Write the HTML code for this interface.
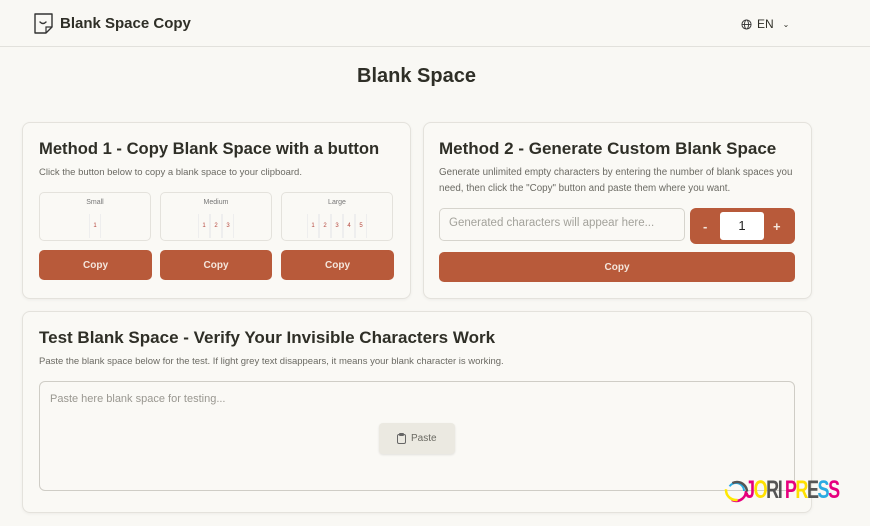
<!DOCTYPE html>
<html><head><meta charset="utf-8"><style>
*{box-sizing:border-box;margin:0;padding:0}
body{width:870px;height:526px;background:#f9f8f4;font-family:"Liberation Sans",sans-serif;color:#2f2f27;position:relative;overflow:hidden}
.hdr{position:absolute;left:0;top:0;width:870px;height:47px;border-bottom:1px solid #e2e1dc;background:#f9f8f4}
.logo{position:absolute;left:33px;top:13px}
.brand{position:absolute;left:60px;top:15px;font-size:15px;font-weight:bold}
.lang{position:absolute;left:741px;top:17px;font-size:12px;display:flex;align-items:center;gap:5px}
h1{position:absolute;left:0;width:833px;text-align:center;top:65px;font-size:20px;font-weight:bold}
.card{position:absolute;border:1px solid #e4e2dc;border-radius:8px;background:#faf9f5;box-shadow:0 1px 3px rgba(0,0,0,.05)}
.h2{position:absolute;font-size:17px;font-weight:bold;white-space:nowrap}
.p{position:absolute;font-size:9.5px;color:#6b6a63;line-height:16px}
.box{position:absolute;top:192px;width:112px;height:49px;border:1px solid #e4e2dc;border-radius:5px;text-align:center}
.box .l{font-size:7px;color:#777;margin-top:6px}
.nums{display:flex;justify-content:center;margin-top:8px}
.nums span{width:12px;height:24px;border-left:1px solid #eee;border-right:1px solid #eee;font-size:6px;color:#b5473d;line-height:24px}
.btn{position:absolute;background:#b85a3a;color:#f4e6dc;border-radius:5px;font-size:10px;font-weight:bold;text-align:center}
</style></head><body>
<div class="hdr">
<svg class="logo" width="22" height="22" viewBox="0 0 22 22"><path d="M2 1h17v13l-6 6H2z" fill="none" stroke="#333" stroke-width="1.4" stroke-linejoin="round"/><path d="M19 14h-6v6" fill="none" stroke="#333" stroke-width="1.2"/><path d="M7 9q3 3 6 0" fill="none" stroke="#333" stroke-width="1.4" stroke-linecap="round"/></svg>
<div class="brand">Blank Space Copy</div>
<div class="lang"><svg width="11" height="11" viewBox="0 0 12 12" fill="none" stroke="#333" stroke-width="1"><circle cx="6" cy="6" r="5"/><ellipse cx="6" cy="6" rx="2.2" ry="5"/><path d="M1 6h10"/></svg>EN <span style="font-size:8px;margin-left:4px">&#8964;</span></div>
</div>
<h1>Blank Space</h1>

<div class="card" style="left:22px;top:122px;width:389px;height:177px"></div>
<div class="h2" style="left:39px;top:139px;font-size:16.6px">Method 1 - Copy Blank Space with a button</div>
<div class="p" style="left:39px;top:165px">Click the button below to copy a blank space to your clipboard.</div>
<div class="box" style="left:39px"><div class="l">Small</div><div class="nums"><span>1</span></div></div>
<div class="box" style="left:160px"><div class="l">Medium</div><div class="nums"><span>1</span><span>2</span><span>3</span></div></div>
<div class="box" style="left:281px"><div class="l">Large</div><div class="nums"><span>1</span><span>2</span><span>3</span><span>4</span><span>5</span></div></div>
<div class="btn" style="left:39px;top:250px;width:113px;height:30px;line-height:31px">Copy</div>
<div class="btn" style="left:160px;top:250px;width:112px;height:30px;line-height:31px">Copy</div>
<div class="btn" style="left:281px;top:250px;width:113px;height:30px;line-height:31px">Copy</div>

<div class="card" style="left:423px;top:122px;width:389px;height:177px"></div>
<div class="h2" style="left:439px;top:139px">Method 2 - Generate Custom Blank Space</div>
<div class="p" style="left:439px;top:165px;width:358px;font-size:9.8px">Generate unlimited empty characters by entering the number of blank spaces you need, then click the "Copy" button and paste them where you want.</div>
<div style="position:absolute;left:439px;top:208px;width:246px;height:33px;border:1px solid #d6d4cd;border-radius:5px;font-size:11.5px;color:#a3a29b;padding:8px 9px">Generated characters will appear here...</div>
<div class="btn" style="left:690px;top:208px;width:105px;height:36px;border-radius:6px;font-size:13px">
<span style="position:absolute;left:13px;top:11px">-</span>
<div style="position:absolute;left:30px;top:4px;width:44px;height:28px;background:#fff;border-radius:3px;color:#222;line-height:28px;font-weight:normal">1</div>
<span style="position:absolute;left:83px;top:11px">+</span></div>
<div class="btn" style="left:439px;top:252px;width:356px;height:30px;line-height:31px">Copy</div>

<div class="card" style="left:22px;top:311px;width:790px;height:202px"></div>
<div class="h2" style="left:39px;top:328px">Test Blank Space - Verify Your Invisible Characters Work</div>
<div class="p" style="left:39px;top:354px">Paste the blank space below for the test. If light grey text disappears, it means your blank character is working.</div>
<div style="position:absolute;left:39px;top:381px;width:756px;height:110px;border:1px solid #cfcdc6;border-radius:6px;font-size:11px;color:#999790;padding:11px 10px">Paste here blank space for testing...</div>
<div style="position:absolute;left:379px;top:423px;width:76px;height:31px;background:#ebe9e1;border-radius:4px;box-shadow:0 1px 2px rgba(0,0,0,.1);font-size:10px;color:#6b6a63;line-height:31px;padding-left:18px">
<svg style="position:absolute;left:18px;top:10px" width="9" height="11" viewBox="0 0 9 11" fill="none" stroke="#666" stroke-width="1"><rect x="0.5" y="1.5" width="8" height="9" rx="1.5"/><rect x="2.5" y="0.5" width="4" height="2" rx=".5"/></svg><span style="margin-left:14px">Paste</span></div>

<div style="position:absolute;left:723px;top:474px;width:124px;height:32px">
<svg width="26" height="32" viewBox="0 0 26 32" style="position:absolute;left:0;top:0"><circle cx="13" cy="17" r="10" fill="none" stroke="#e6007e" stroke-width="2.5" stroke-dasharray="20 60"/><circle cx="13" cy="16" r="10" fill="none" stroke="#ffe800" stroke-width="2.5" stroke-dasharray="18 60" stroke-dashoffset="-14"/><circle cx="13" cy="17" r="8" fill="none" stroke="#29abe2" stroke-width="2" stroke-dasharray="20 60" stroke-dashoffset="-30"/><circle cx="14" cy="18" r="10" fill="none" stroke="#555" stroke-width="2.5" stroke-dasharray="20 60" stroke-dashoffset="-42"/></svg>
<div style="position:absolute;left:22px;top:2px;font-size:25px;font-weight:bold;letter-spacing:-2px;transform:scaleX(.72);transform-origin:left;font-family:'Liberation Sans Narrow','Liberation Sans',sans-serif;white-space:nowrap"><span style="color:#e6007e">J</span><span style="color:#ffe000">O</span><span style="color:#555">RI</span> <span style="color:#e6007e">P</span><span style="color:#ffe000">R</span><span style="color:#555">E</span><span style="color:#29abe2">S</span><span style="color:#e6007e">S</span></div>
</div>
</body></html>
